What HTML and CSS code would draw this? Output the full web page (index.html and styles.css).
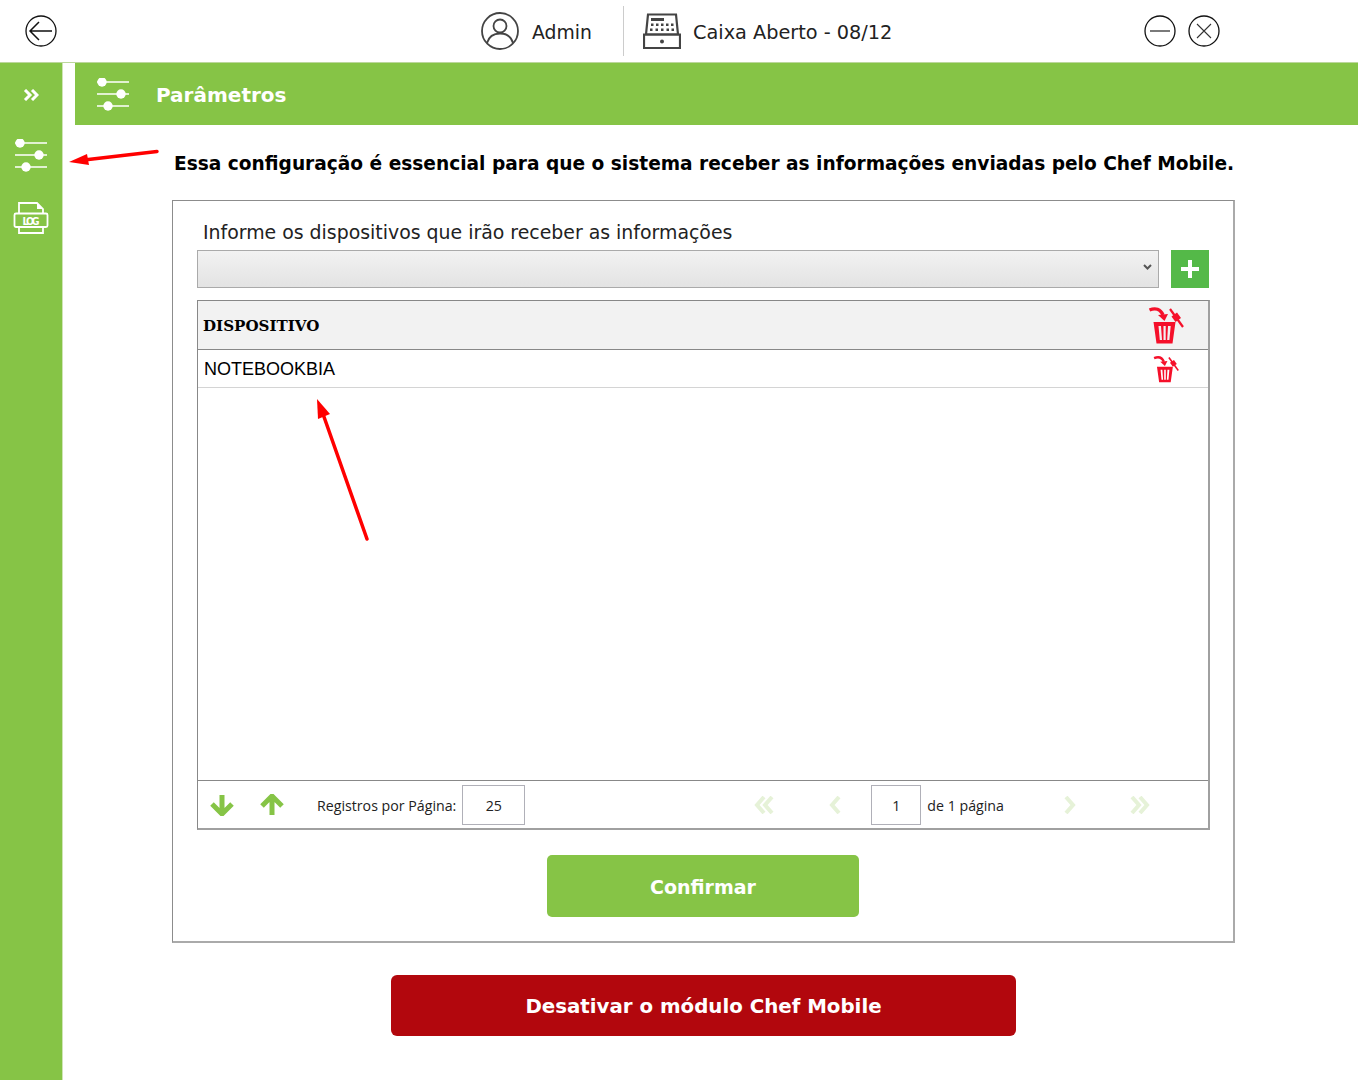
FILE: index.html
```html
<!DOCTYPE html>
<html lang="pt-BR">
  <head>
    <meta charset="UTF-8" />
    <meta name="viewport" content="width=device-width, initial-scale=1.0" />
    <title>Parâmetros</title>
    <link rel="stylesheet" href="styles.css">
  </head>
  <body>
    <header class="topbar">
      <svg class="icon-back" width="32" height="32" viewBox="0 0 32 32">
        <circle cx="16" cy="16" r="15" fill="none" stroke="#111" stroke-width="1.3"/>
        <path d="M27 16H5M14 7l-9 9 9 9" fill="none" stroke="#111" stroke-width="1.5"/>
      </svg>
      <div class="status">
        <svg width="38" height="38" viewBox="0 0 38 38">
          <circle cx="19" cy="19" r="18" fill="none" stroke="#444" stroke-width="1.8"/>
          <circle cx="19" cy="14" r="6.5" fill="none" stroke="#444" stroke-width="1.8"/>
          <path d="M6 31c2-7 7-9.500 13-9.500S30 24 32 31" fill="none" stroke="#444" stroke-width="1.8"/>
        </svg>
        <span class="status-text admin">Admin</span>
        <span class="divider"></span>
        <svg width="38" height="36" viewBox="0 0 38 36">
          <path d="M5 1.500h28l2 20H3z" fill="none" stroke="#444" stroke-width="2.200"/>
          <path d="M1 21.500h36V35H1z" fill="none" stroke="#444" stroke-width="2.200"/>
          <path d="M8 5h13v3H8z" fill="#444"/>
          <path d="M8 10.500h2.500V13H8zM13 10.500h2.500V13H13zM18 10.500h2.500V13H18zM23 10.500h2.500V13H23zM28 10.500h2.500V13H28zM7 15.500h2.500V18H7zM12.500 15.500H15V18h-2.500zM18 15.500h2.500V18H18zM23.500 15.500H26V18h-2.500zM28.500 15.500H31V18h-2.500z" fill="#444"/>
          <circle cx="19" cy="28.500" r="2" fill="#444"/>
        </svg>
        <span class="status-text caixa">Caixa Aberto - 08/12</span>
      </div>
      <div class="window-btns">
        <svg width="32" height="32" viewBox="0 0 32 32">
          <circle cx="16" cy="16" r="15" fill="none" stroke="#111" stroke-width="1.3"/>
          <path d="M6 16h20" stroke="#222" stroke-width="1.2"/>
        </svg>
        <svg width="32" height="32" viewBox="0 0 32 32">
          <circle cx="16" cy="16" r="15" fill="none" stroke="#111" stroke-width="1.3"/>
          <path d="M9 9l14 14M23 9L9 23" stroke="#333" stroke-width="1.1"/>
        </svg>
      </div>
    </header>

    <div class="main">
      <nav class="sidebar">
        <svg class="side-chevrons" width="16" height="12" viewBox="0 0 16 12">
          <path d="M2 1l5 5-5 5M9 1l5 5-5 5" fill="none" stroke="#fff" stroke-width="3"/>
        </svg>
        <svg class="side-sliders" width="32" height="34" viewBox="0 0 32 34">
          <use href="#sliders"/>
        </svg>
        <svg class="side-log" width="36" height="36" viewBox="0 0 36 36">
          <path d="M6 12V2h18l6 6v4M6 26v6h24v-6" fill="none" stroke="#fff" stroke-width="1.800"/>
          <path d="M24 2v6h6z" fill="#fff"/>
          <rect x="1.500" y="12.500" width="33" height="13.500" rx="1.500" fill="none" stroke="#fff" stroke-width="1.800"/>
          <text x="9.500" y="23.500" class="log-text" textLength="17" lengthAdjust="spacing">LOG</text>
        </svg>
      </nav>

      <main class="content">
        <div class="page-title">
          <svg class="title-icon" width="32" height="34" viewBox="0 0 32 34">
            <defs>
              <g id="sliders">
                <path d="M0 4h32M0 16h32M0 28h32" stroke="#fff" stroke-width="1.300"/>
                <circle cx="5" cy="4" r="4.700" fill="#fff"/>
                <circle cx="24" cy="16" r="4.700" fill="#fff"/>
                <circle cx="11" cy="28" r="4.700" fill="#fff"/>
              </g>
            </defs>
            <use href="#sliders"/>
          </svg>
          <h1>Parâmetros</h1>
        </div>

        <p class="notice">Essa configuração é essencial para que o sistema receber as informações enviadas pelo Chef Mobile.</p>

        <section class="card">
          <label class="field-label" for="dispositivo">Informe os dispositivos que irão receber as informações</label>
          <div class="select-row">
            <div class="fake-select" id="dispositivo">
              <svg width="9" height="6" viewBox="0 0 9 6"><path d="M1 1l3.500 3.500L8 1" fill="none" stroke="#555" stroke-width="2"/></svg>
            </div>
            <button class="btn-add" type="button">
              <svg width="18" height="18" viewBox="0 0 18 18"><path d="M9 0v18M0 9h18" stroke="#fff" stroke-width="4"/></svg>
            </button>
          </div>

          <div class="grid">
            <div class="grid-head">
              <span>DISPOSITIVO</span>
              <svg class="trash trash-big" width="36" height="38" viewBox="0 0 36 38"><use href="#trash"/></svg>
            </div>
            <div class="grid-row">
              <span>NOTEBOOKBIA</span>
              <svg class="trash trash-small" width="26" height="28" viewBox="0 0 36 38">
                <defs>
                  <g id="trash">
                    <path d="M1.500 4c6-2.500 11-1 13.500 5" fill="none" stroke="#f5102a" stroke-width="3.400"/>
                    <path d="M10 9l10-1-3.500 7z" fill="#f5102a"/>
                    <path d="M22 3l13 18" stroke="#f5102a" stroke-width="2.200"/>
                    <path d="M23.500 10.500l5.500-4 4 5.500-5.500 4z" fill="#f5102a"/>
                    <path fill-rule="evenodd" fill="#f5102a" d="M5.500 16h22L24.500 37.500H8.500zM10.500 20l1.300 14h2.200L13 20zM15.500 20v14h2.200V20zM20 20l-.8 14h2.200l1.300-14z"/>
                  </g>
                </defs>
                <use href="#trash"/>
              </svg>
            </div>
            <div class="grid-body"></div>
            <div class="grid-foot">
              <svg class="sort-icon" width="24" height="22" viewBox="0 0 24 22"><path d="M12 1v18M2 10l10 10 10-10" fill="none" stroke="#86c446" stroke-width="5"/></svg>
              <svg class="sort-icon sort-up" width="24" height="22" viewBox="0 0 24 22"><path d="M12 21V3M2 12L12 2l10 10" fill="none" stroke="#86c446" stroke-width="5"/></svg>
              <span class="per-page">Registros por Página:</span>
              <span class="num-box box-size">25</span>
              <div class="pager">
                <svg class="pg pg-first" width="20" height="18" viewBox="0 0 20 18"><path d="M10 1L3 9l7 8M18 1l-7 8 7 8" fill="none" stroke="#e6f2d8" stroke-width="4"/></svg>
                <svg class="pg pg-prev" width="12" height="18" viewBox="0 0 12 18"><path d="M10 1L3 9l7 8" fill="none" stroke="#e6f2d8" stroke-width="4"/></svg>
                <span class="num-box box-page">1</span>
                <span class="of-pages">de 1 página</span>
                <svg class="pg pg-next" width="12" height="18" viewBox="0 0 12 18"><path d="M2 1l7 8-7 8" fill="none" stroke="#e6f2d8" stroke-width="4"/></svg>
                <svg class="pg pg-last" width="20" height="18" viewBox="0 0 20 18"><path d="M2 1l7 8-7 8M10 1l7 8-7 8" fill="none" stroke="#e6f2d8" stroke-width="4"/></svg>
              </div>
            </div>
          </div>

          <button class="btn-confirm" type="button">Confirmar</button>
        </section>

        <button class="btn-disable" type="button">Desativar o módulo Chef Mobile</button>
      </main>
    </div>

    <!-- setas vermelhas por cima da tela -->
    <svg class="note-arrow arrow-left" width="92" height="18" viewBox="0 0 92 18">
      <path d="M89 2.500L16 11" stroke="#f00" stroke-width="3.500" stroke-linecap="round"/>
      <path d="M1 13L19 5l2 11z" fill="#f00"/>
    </svg>
    <svg class="note-arrow arrow-up" width="56" height="144" viewBox="0 0 56 144">
      <path d="M52 141L8 16" stroke="#f00" stroke-width="3.500" stroke-linecap="round"/>
      <path d="M2 1l13 15-12 5z" fill="#f00"/>
    </svg>
  </body>
</html>
```

FILE: styles.css
```css
* {
  box-sizing: border-box;
}

html,
body {
  height: 1080px;
  margin: 0;
  overflow: hidden;
}

body {
  position: relative;
  background-color: white;
  font-family: "DejaVu Sans", Verdana, sans-serif;
  color: #000;
}

.topbar {
  height: 63px;
  display: flex;
  align-items: center;
  padding-left: 25px;
  border-bottom: 1px solid #bcd79c;
}

.status {
  display: flex;
  align-items: center;
  margin-left: 424px;
}

.status-text {
  margin-top: 2px;
  margin-left: 12px;
  color: #222;
}

.caixa {
  font-size: 19.300px;
}

.admin {
  width: 91px;
  margin-left: 13px;
  font-size: 18.800px;
}

.divider {
  width: 1px;
  height: 50px;
  background-color: #ccc;
  margin-right: 19px;
}

.window-btns {
  display: flex;
  gap: 12px;
  margin-left: 252px;
}

.main {
  display: flex;
  height: 1017px;
}

.sidebar {
  width: 63px;
  flex: none;
  display: flex;
  flex-direction: column;
  align-items: center;
  background-color: #86c446;
  border-right: 1px solid #cfe4b5;
}

.side-chevrons {
  margin-top: 26px;
}

.side-sliders {
  margin-top: 38px;
}

.side-log {
  margin-top: 28px;
}

.log-text {
  font-family: "DejaVu Sans Condensed", "DejaVu Sans", sans-serif;
  font-size: 10.500px;
  font-weight: bold;
  fill: #fff;
}

.content {
  flex: 1;
  padding-left: 12px;
}

.page-title {
  height: 62px;
  display: flex;
  align-items: center;
  padding-left: 22px;
  background-color: #86c446;
}

.title-icon {
  margin-top: 2px;
}

.page-title h1 {
  margin: 2px 0 0 27px;
  font-size: 20px;
  font-weight: bold;
  color: #fff;
}

.notice {
  margin: 26px 0 0 99px;
  font-size: 18.580px;
  font-weight: bold;
  line-height: 26px;
  white-space: nowrap;
}

.card {
  width: 1063px;
  height: 743px;
  margin: 23px 0 0 97px;
  padding: 19px 24px 0;
  border: 1px solid #8c8c8c;
  border-right: 2px solid #aaa;
  border-bottom: 2px solid #aaa;
}

.field-label {
  display: block;
  margin-left: 6px;
  font-size: 18.900px;
  line-height: 24px;
  color: #222;
}

.select-row {
  display: flex;
  gap: 12px;
  margin-top: 6px;
}

.fake-select {
  width: 962px;
  height: 38px;
  display: flex;
  align-items: center;
  justify-content: flex-end;
  padding: 0 6px 4px 0;
  background: linear-gradient(#f2f2f2, #e3e3e3);
  border: 1px solid #aaa;
}

.btn-add {
  width: 38px;
  height: 38px;
  display: flex;
  align-items: center;
  justify-content: center;
  padding: 0;
  background-color: #54b948;
  border: 0;
}

.grid {
  width: 1013px;
  height: 530px;
  display: flex;
  flex-direction: column;
  margin-top: 12px;
  border: 1px solid #888;
  border-right: 2px solid #a0a0a0;
  border-bottom: 2px solid #a0a0a0;
}

.grid-head,
.grid-row {
  display: flex;
  align-items: center;
  justify-content: space-between;
}

.grid-head {
  height: 49px;
  padding: 0 24px 0 5px;
  background-color: #f2f2f2;
  border-bottom: 1px solid #888;
  font-family: "DejaVu Serif", serif;
  font-size: 15.100px;
  font-weight: bold;
}

.grid-head span,
.grid-row span {
  margin-top: 2px;
}

.grid-row {
  height: 38px;
  padding: 0 29px 0 6px;
  border-bottom: 1px solid #d4d4d4;
  font-family: "Liberation Sans", sans-serif;
  font-size: 18px;
}

.grid-body {
  flex: 1;
  border-bottom: 1px solid #888;
}

.grid-foot {
  height: 47px;
  display: flex;
  align-items: center;
  padding: 1px 0 0 12px;
  font-family: "Open Sans", sans-serif;
  font-size: 14.200px;
  color: #222;
}

.sort-up {
  margin-left: 26px;
}

.per-page {
  margin-left: 33px;
}

.num-box {
  height: 40px;
  display: flex;
  align-items: center;
  justify-content: center;
  border: 1px solid #b0b0b8;
}

.box-size {
  width: 63px;
  margin-left: 6px;
}

.pager {
  display: flex;
  align-items: center;
  margin-left: 229px;
}

.box-page {
  width: 50px;
  margin-left: 30px;
}

.pg-prev {
  margin-left: 55px;
}

.of-pages {
  width: 137px;
  margin-left: 6px;
}

.pg-last {
  margin-left: 54px;
}

.btn-confirm,
.btn-disable {
  display: block;
  border: 0;
  padding: 2px 0 0;
  font-family: "DejaVu Sans", Verdana, sans-serif;
  font-weight: bold;
  color: #fff;
}

.btn-confirm {
  width: 312px;
  height: 62px;
  margin: 25px 0 0 350px;
  background-color: #86c446;
  border-radius: 5px;
  font-size: 19px;
}

.btn-disable {
  width: 625px;
  height: 61px;
  margin: 32px 0 0 316px;
  background-color: #b2070d;
  border-radius: 6px;
  font-size: 19.800px;
}

.note-arrow {
  position: absolute;
}

.arrow-left {
  left: 68px;
  top: 149px;
}

.arrow-up {
  left: 315px;
  top: 398px;
}
```
